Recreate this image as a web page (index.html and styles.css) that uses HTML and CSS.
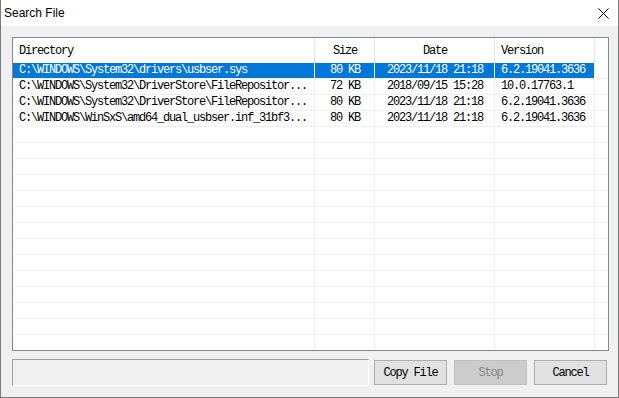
FILE: index.html
```html
<!DOCTYPE html>
<html lang="en">
<head>
    <meta charset="UTF-8">
    <meta name="viewport" content="width=device-width, initial-scale=1.0">
    <title>Search File</title>
    <link rel="stylesheet" href="styles.css">
</head>
<body>
    <div class="window">
        <div class="titlebar">
            <span class="title">Search File</span>
            <svg class="close" width="11" height="11" viewBox="0 0 11 11">
                <path d="M0.5 0.5 L10.5 10.5 M10.5 0.5 L0.5 10.5" stroke="#000" stroke-width="1" fill="none"/>
            </svg>
        </div>

        <div class="content">
            <div class="list">
                <table class="files">
                    <colgroup>
                        <col class="col-dir">
                        <col class="col-size">
                        <col class="col-date">
                        <col class="col-ver">
                        <col class="col-fill">
                    </colgroup>
                    <thead>
                        <tr>
                            <th class="left">Directory</th>
                            <th>Size</th>
                            <th>Date</th>
                            <th class="left">Version</th>
                            <th class="fill"></th>
                        </tr>
                    </thead>
                    <tbody>
                        <tr class="selected">
                            <td>C:\WINDOWS\System32\drivers\usbser.sys</td>
                            <td class="center">80 KB</td>
                            <td class="center">2023/11/18 21:18</td>
                            <td>6.2.19041.3636</td>
                            <td class="fill"></td>
                        </tr>
                        <tr>
                            <td>C:\WINDOWS\System32\DriverStore\FileRepositor...</td>
                            <td class="center">72 KB</td>
                            <td class="center">2018/09/15 15:28</td>
                            <td>10.0.17763.1</td>
                            <td class="fill"></td>
                        </tr>
                        <tr>
                            <td>C:\WINDOWS\System32\DriverStore\FileRepositor...</td>
                            <td class="center">80 KB</td>
                            <td class="center">2023/11/18 21:18</td>
                            <td>6.2.19041.3636</td>
                            <td class="fill"></td>
                        </tr>
                        <tr>
                            <td>C:\WINDOWS\WinSxS\amd64_dual_usbser.inf_31bf3...</td>
                            <td class="center">80 KB</td>
                            <td class="center">2023/11/18 21:18</td>
                            <td>6.2.19041.3636</td>
                            <td class="fill"></td>
                        </tr>
                        <tr><td></td><td></td><td></td><td></td><td class="fill"></td></tr>
                        <tr><td></td><td></td><td></td><td></td><td class="fill"></td></tr>
                        <tr><td></td><td></td><td></td><td></td><td class="fill"></td></tr>
                        <tr><td></td><td></td><td></td><td></td><td class="fill"></td></tr>
                        <tr><td></td><td></td><td></td><td></td><td class="fill"></td></tr>
                        <tr><td></td><td></td><td></td><td></td><td class="fill"></td></tr>
                        <tr><td></td><td></td><td></td><td></td><td class="fill"></td></tr>
                        <tr><td></td><td></td><td></td><td></td><td class="fill"></td></tr>
                        <tr><td></td><td></td><td></td><td></td><td class="fill"></td></tr>
                        <tr><td></td><td></td><td></td><td></td><td class="fill"></td></tr>
                        <tr><td></td><td></td><td></td><td></td><td class="fill"></td></tr>
                        <tr><td></td><td></td><td></td><td></td><td class="fill"></td></tr>
                        <tr><td></td><td></td><td></td><td></td><td class="fill"></td></tr>
                        <tr><td></td><td></td><td></td><td></td><td class="fill"></td></tr>
                        <tr><td></td><td></td><td></td><td></td><td class="fill"></td></tr>
                    </tbody>
                </table>
            </div>

            <div class="footer">
                <div class="status"></div>
                <button class="btn">Copy File</button>
                <button class="btn" disabled>Stop</button>
                <button class="btn">Cancel</button>
            </div>
        </div>
    </div>
</body>
</html>
```

FILE: styles.css
```css
html, body {
    margin: 0;
    padding: 0;
    background: #f0f0f0;
}

.window {
    box-sizing: border-box;
    width: 619px;
    height: 398px;
    border: 1px solid #7a7a7a;
    border-top: none;
    background: #f0f0f0;
    display: flex;
    flex-direction: column;
}

.titlebar {
    height: 26px;
    background: white;
    display: flex;
    align-items: center;
    justify-content: space-between;
    padding: 0 9px 0 3px;
}

.title {
    font-family: "Liberation Sans", Arial, sans-serif;
    font-size: 12px;
    color: #000;
}

.close {
    display: block;
}

.content {
    flex: 1;
    display: flex;
    flex-direction: column;
    padding: 11px 9px 11px 11px;
}

.list {
    height: 314px;
    box-sizing: border-box;
    border: 1px solid #828790;
    background: white;
    overflow: hidden;
}

.files {
    width: 595px;
    table-layout: fixed;
    border-collapse: separate;
    border-spacing: 0;
    font-family: "Liberation Mono", "Courier New", monospace;
    font-size: 12px;
    letter-spacing: -1.2px;
    color: #000;
}

.col-dir { width: 302px; }
.col-size { width: 60px; }
.col-date { width: 120px; }
.col-ver { width: 100px; }
.col-fill { width: 13px; }

.files th {
    height: 24px;
    padding: 1px 5px 0 6px;
    font-weight: normal;
    text-align: center;
    border-right: 1px solid #e5e5e5;
    white-space: nowrap;
}

.files td {
    height: 15px;
    line-height: 15px;
    padding: 0 5px 0 6px;
    border-right: 1px solid #f0f0f0;
    border-bottom: 1px solid #f0f0f0;
    white-space: nowrap;
    overflow: hidden;
}

.files th.left {
    text-align: left;
}

.files td.center {
    text-align: center;
}

.files .fill {
    border-right: none;
}

.files tr.selected td {
    background: #0078d7;
    color: white;
}

.files tr.selected td.fill {
    background: white;
}

.footer {
    margin-top: 8px;
    height: 27px;
    display: flex;
    align-items: center;
    gap: 7px;
    padding-right: 2px;
}

.status {
    flex: 1;
    height: 27px;
    box-sizing: border-box;
    margin-right: -2px;
    border-top: 1px solid #a0a0a0;
    border-left: 1px solid #a0a0a0;
    border-right: 1px solid white;
    border-bottom: 1px solid white;
}

.btn {
    width: 73px;
    height: 25px;
    box-sizing: border-box;
    border: 1px solid #adadad;
    background: #e1e1e1;
    font-family: "Liberation Mono", "Courier New", monospace;
    font-size: 12px;
    letter-spacing: -1.2px;
    color: #000;
    padding: 0;
}

.btn:disabled {
    background: #cccccc;
    border-color: #bfbfbf;
    color: #838383;
}
```
